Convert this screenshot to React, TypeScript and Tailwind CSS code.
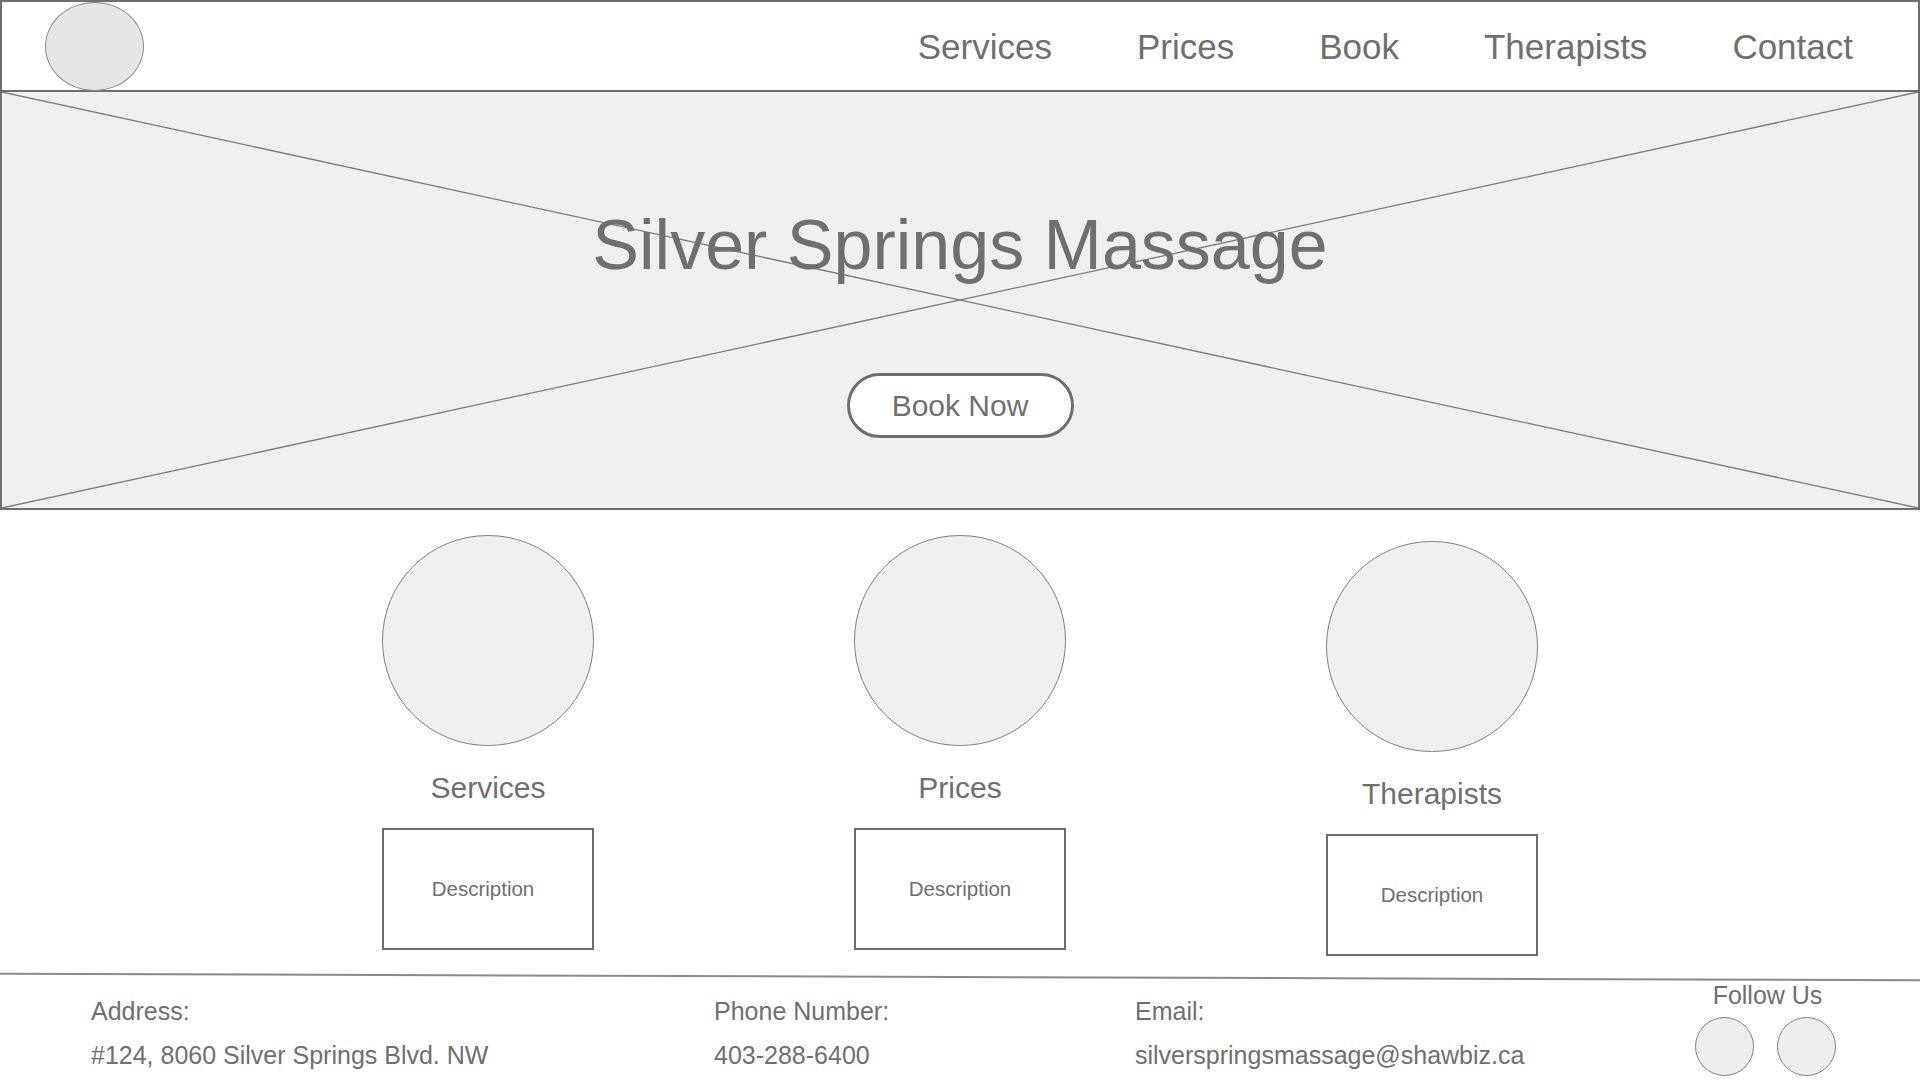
import React from "react";

const NAV = ["Services", "Prices", "Book", "Therapists", "Contact"];

function Feature({ title, offset, shift }: { title: string; offset?: boolean; shift?: boolean }) {
  return (
    <div className={`flex w-[212px] flex-col items-center ${offset ? "pt-[6px]" : ""}`}>
      <div className="h-[211px] w-[212px] rounded-full border border-[#808080] bg-[#f0f0f0]" />
      <div className="mt-[24px] text-[30px] leading-[35px] text-[#6f6f6f]">{title}</div>
      <div className="mt-[23px] flex h-[122px] w-[212px] items-center justify-center border-2 border-[#6e6e6e] bg-white">
        <span className={`text-[20.5px] leading-[24px] text-[#6f6f6f] ${shift ? "mr-[10px]" : ""}`}>
          Description
        </span>
      </div>
    </div>
  );
}

export default function App() {
  return (
    <div
      className="min-h-screen w-[1920px] bg-white text-[#6f6f6f]"
      style={{ fontFamily: '"Liberation Sans", Arial, sans-serif' }}
    >
      {/* Header */}
      <header className="flex h-[92px] items-center border-2 border-[#6e6e6e] bg-white pt-[1px]">
        <div className="ml-[43px] h-[89px] w-[99px] rounded-[50%] border border-[#8a8a8a] bg-[#e6e6e6]" />
        <nav className="ml-auto mr-[65px] flex items-center gap-[85px]">
          {NAV.map((n) => (
            <a key={n} className="text-[35px] leading-[35px] text-[#6f6f6f]">
              {n}
            </a>
          ))}
        </nav>
      </header>

      {/* Hero */}
      <section className="relative flex h-[418px] flex-col items-center border-x-2 border-b-2 border-[#6e6e6e] bg-[#f0f0f0] pt-[118px]">
        <svg
          className="pointer-events-none absolute inset-0 h-full w-full"
          viewBox="0 0 100 100"
          preserveAspectRatio="none"
        >
          <line x1="0" y1="0" x2="100" y2="100" stroke="#7a7a7a" strokeWidth="1.3" vectorEffect="non-scaling-stroke" />
          <line x1="0" y1="100" x2="100" y2="0" stroke="#7a7a7a" strokeWidth="1.3" vectorEffect="non-scaling-stroke" />
        </svg>
        <h1 className="relative text-[70px] leading-[70px] text-[#6f6f6f]">Silver Springs Massage</h1>
        <button
          type="button"
          className="relative mt-[93px] flex h-[65px] w-[227px] items-center justify-center rounded-full border-[3px] border-[#6e6e6e] bg-white text-[30px] text-[#6f6f6f]"
        >
          Book Now
        </button>
      </section>

      {/* Features */}
      <section className="flex items-start justify-center gap-[260px] pt-[25px]">
        <Feature title="Services" shift />
        <Feature title="Prices" />
        <Feature title="Therapists" offset />
      </section>

      {/* Divider */}
      <div className="mt-[20px] h-[2px] w-full rotate-[0.2deg] bg-[#8a8a8a]" />

      {/* Footer */}
      <footer className="grid grid-cols-[623px_421px_560px_141px] items-start pl-[91px] pt-[2px] text-[25px] leading-[30px]">
        <div className="mt-[16px] flex flex-col gap-[14px]">
          <span>Address:</span>
          <span>#124, 8060 Silver Springs Blvd. NW</span>
        </div>
        <div className="mt-[16px] flex flex-col gap-[14px]">
          <span>Phone Number:</span>
          <span>403-288-6400</span>
        </div>
        <div className="mt-[16px] flex flex-col gap-[14px]">
          <span>Email:</span>
          <span>silverspringsmassage@shawbiz.ca</span>
        </div>
        <div className="flex flex-col items-center">
          <span className="ml-[4px]">Follow Us</span>
          <div className="mt-[7px] flex gap-[23px]">
            <div className="h-[59px] w-[59px] rounded-full border border-[#808080] bg-[#eeeeee]" />
            <div className="h-[59px] w-[59px] rounded-full border border-[#808080] bg-[#eeeeee]" />
          </div>
        </div>
      </footer>
    </div>
  );
}
